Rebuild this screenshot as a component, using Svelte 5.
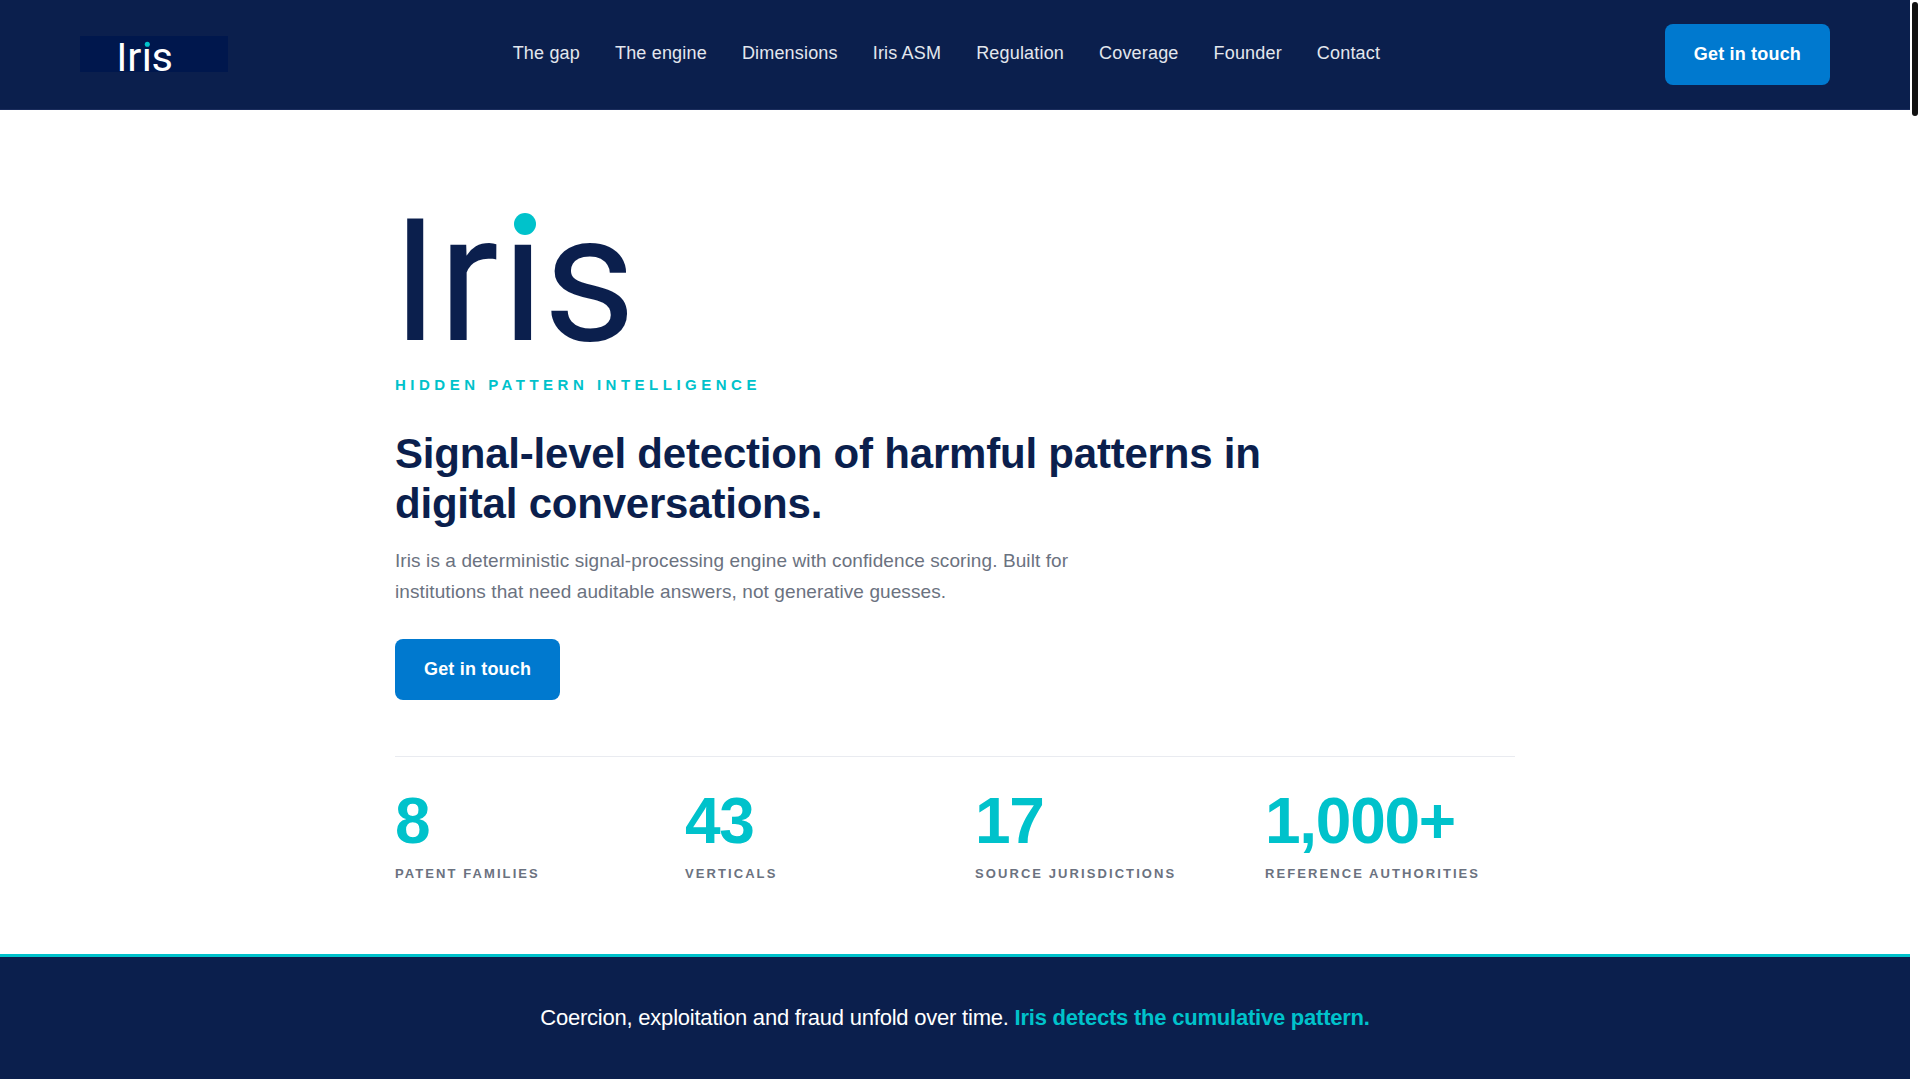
<script>
  const links = ['The gap', 'The engine', 'Dimensions', 'Iris ASM', 'Regulation', 'Coverage', 'Founder', 'Contact'];
  const stats = [
    { value: '8', label: 'Patent families' },
    { value: '43', label: 'Verticals' },
    { value: '17', label: 'Source jurisdictions' },
    { value: '1,000+', label: 'Reference authorities' }
  ];
</script>

<!-- The letter i loses its own dot to the clip and gets the larger teal one. -->
{#snippet wordmark(clip)}
  <clipPath id={clip}>
    <path d="M-20 0H105V200H-20ZM105 50H148V200H105ZM148 0H280V200H148Z" />
  </clipPath>
  <text class="letters" y="150" x="-3 43 106 148" clip-path="url(#{clip})"><tspan class="cap">I</tspan>ris</text>
  <circle class="dot" cx="130" cy="34" r="11" />
{/snippet}

<div class="window">
  <div class="page">
    <header>
      <a class="brand" href="#top" aria-label="Iris">
        <svg viewBox="-161 -2 640 156">{@render wordmark('clip-small')}</svg>
      </a>
      <nav>
        {#each links as link}
          <a href="#{link.toLowerCase().replace(' ', '-')}">{link}</a>
        {/each}
      </nav>
      <a class="button" href="#contact">Get in touch</a>
    </header>

    <main id="top">
      <svg class="mark" viewBox="0 0 280 160" role="img" aria-label="Iris">{@render wordmark('clip-large')}</svg>
      <p class="tagline">Hidden pattern intelligence</p>
      <h1>Signal-level detection of harmful patterns in digital conversations.</h1>
      <p class="lead">
        Iris is a deterministic signal-processing engine with confidence scoring. Built for institutions that need
        auditable answers, not generative guesses.
      </p>
      <a class="button" href="#contact">Get in touch</a>
      <dl>
        {#each stats as stat}
          <div>
            <dt>{stat.label}</dt>
            <dd>{stat.value}</dd>
          </div>
        {/each}
      </dl>
    </main>

    <section class="banner">
      <p>Coercion, exploitation and fraud unfold over time. <strong>Iris detects the cumulative pattern.</strong></p>
    </section>
  </div>
  <div class="scrollbar"><div class="thumb"></div></div>
</div>

<style>
  :global(body) {
    margin: 0;
    background: #fff;
  }
  .window {
    display: flex;
    font: 18px/29px 'Liberation Sans', Arial, sans-serif;
    color: #0b1f4d;
  }
  .page {
    flex: 1;
    min-width: 0;
  }
  header {
    display: flex;
    align-items: center;
    justify-content: space-between;
    padding: 24px 80px;
    background: #0b1f4d;
    border-bottom: 1px solid #1a2c5c;
  }
  .brand {
    display: block;
    width: 148px;
    height: 36px;
    margin-bottom: 1px;
    background: #00174d;
    color: #fff;
  }
  .brand svg {
    display: block;
    width: 100%;
    height: 100%;
    overflow: visible;
  }
  .letters {
    font-family: Roboto, sans-serif;
    font-size: 180px;
    fill: currentColor;
  }
  .cap {
    font-size: 170px;
  }
  .dot {
    fill: #00c2cb;
  }
  nav {
    display: flex;
    gap: 35px;
    padding-bottom: 2px;
    letter-spacing: 0.01em;
  }
  nav a {
    color: #e3e7ee;
    text-decoration: none;
    white-space: nowrap;
  }
  .button {
    display: inline-block;
    padding: 16px 29px;
    border-radius: 8px;
    background: #0079cf;
    color: #fff;
    font-weight: 700;
    letter-spacing: 0.01em;
    text-decoration: none;
    white-space: nowrap;
  }
  main {
    max-width: 1120px;
    margin: 0 auto;
    padding: 80px 40px 70px;
  }
  .mark {
    display: block;
    width: 280px;
    height: 160px;
    overflow: visible;
  }
  p,
  h1,
  dl,
  dd {
    margin: 0;
  }
  .tagline {
    margin-top: 23px;
    font-size: 15px;
    line-height: 24px;
    font-weight: 700;
    letter-spacing: 0.3em;
    text-transform: uppercase;
    color: #00c2cb;
  }
  h1 {
    max-width: 920px;
    margin-top: 32px;
    font-size: 42px;
    line-height: 50px;
    letter-spacing: -0.005em;
  }
  .lead {
    max-width: 720px;
    margin: 16px 0 32px;
    font-size: 19px;
    line-height: 31px;
    letter-spacing: 0.005em;
    color: #6b7280;
  }
  dl {
    display: grid;
    grid-template-columns: repeat(4, 1fr);
    gap: 40px;
    margin-top: 56px;
    padding-top: 32px;
    border-top: 1px solid #e9ebf0;
  }
  dl div {
    display: flex;
    flex-direction: column-reverse;
    gap: 10px;
  }
  dd {
    font-size: 64px;
    line-height: 64px;
    font-weight: 700;
    letter-spacing: -0.02em;
    color: #00c2cb;
  }
  dt {
    font-size: 13px;
    line-height: 21px;
    font-weight: 700;
    letter-spacing: 0.16em;
    text-transform: uppercase;
    white-space: nowrap;
    color: #6b7280;
  }
  .banner {
    padding: 43px 40px;
    border-top: 3px solid #00c2cb;
    background: #0b1f4d;
    color: #fff;
    font-size: 22px;
    line-height: 36px;
    letter-spacing: -0.01em;
    text-align: center;
  }
  strong {
    color: #00c2cb;
  }
  .scrollbar {
    width: 10px;
    box-sizing: border-box;
    padding: 2px;
  }
  .thumb {
    height: 114px;
    border-radius: 3px;
    background: #111;
  }
</style>
